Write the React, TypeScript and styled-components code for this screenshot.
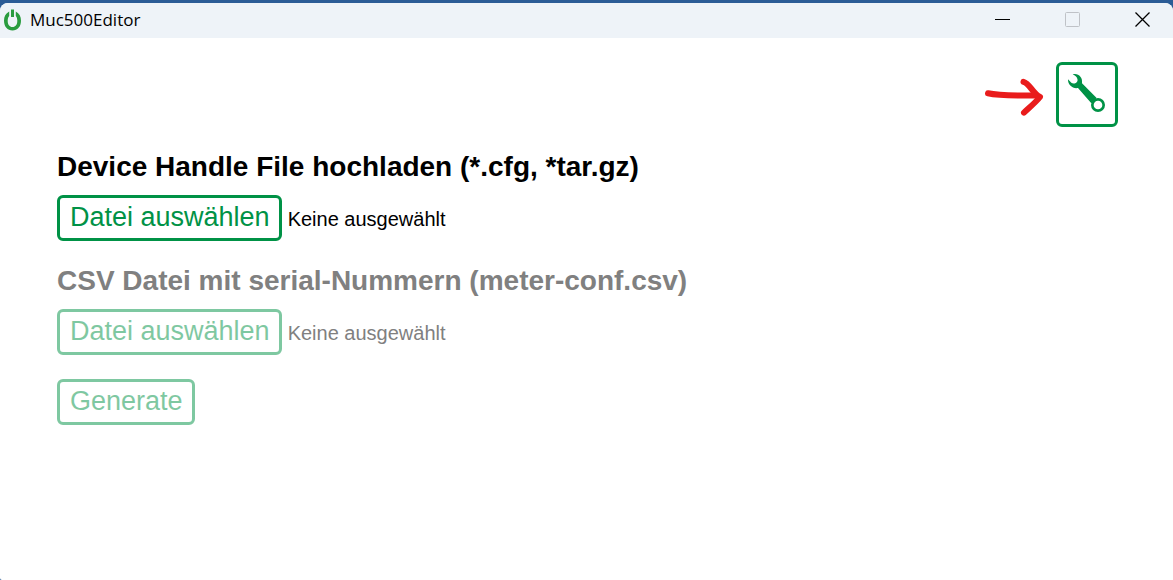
import React, { useRef, useState } from 'react';
import styled, { createGlobalStyle } from 'styled-components';

const green = '#009246';

const GlobalStyle = createGlobalStyle`
  * { box-sizing: border-box; }
  body {
    margin: 0;
    background: #2b5c96;
    font-family: "Liberation Sans", Arial, sans-serif;
  }
`;

const Desktop = styled.div`
  padding-top: 3px;
`;

const AppWindow = styled.div`
  display: flex;
  flex-direction: column;
  min-height: calc(100vh - 3px);
  background: #fff;
  border-radius: 8px 8px 0 2px;
  overflow: hidden;
`;

const TitleBar = styled.header`
  display: flex;
  align-items: center;
  gap: 9px;
  height: 35px;
  padding: 0 0 2px 4px;
  background: #eef3f8;
`;

const Title = styled.span`
  flex: 1;
  font-family: "Open Sans", sans-serif;
  font-size: 17px;
  line-height: 24px;
  color: #000;
`;

const CaptionButton = styled.button`
  display: flex;
  align-items: center;
  justify-content: center;
  width: 61px;
  height: 33px;
  padding: 0;
  border: 0;
  background: transparent;
  color: #000;

  &:disabled { color: #bfc2c7; }
`;

const Content = styled.main`
  display: flex;
  flex-direction: column;
  align-items: flex-start;
  gap: 24px;
  padding: 24px 55px 24px 57px;
`;

const Toolbar = styled.div`
  display: flex;
  align-self: stretch;
  align-items: center;
  justify-content: flex-end;
  gap: 10px;
`;

const OutlineButton = styled.button`
  padding: 4px 9px 5px 10px;
  border: 3px solid ${green};
  border-radius: 6px;
  background: #fff;
  color: ${green};
  font-family: inherit;
  font-size: 27px;
  line-height: 31px;

  &:disabled { opacity: 0.5; }
`;

const SettingsButton = styled(OutlineButton)`
  display: flex;
  padding: 0;
`;

const FieldLabel = styled.label<{ $muted: boolean }>`
  display: block;
  margin-bottom: 12px;
  font-size: 28px;
  font-weight: 700;
  line-height: 32px;
  color: ${p => (p.$muted ? '#808080' : '#000')};
`;

const FileRow = styled.div`
  display: flex;
  align-items: baseline;
  gap: 6px;
`;

const FileStatus = styled.span<{ $muted: boolean }>`
  font-size: 20px;
  line-height: 24px;
  color: ${p => (p.$muted ? '#808080' : '#000')};
`;

const HiddenFileInput = styled.input`
  display: none;
`;

const PowerLogo = () => (
  <svg width="17" height="22" viewBox="0 0 17 22" fill="none" aria-hidden="true">
    <path d="M5.200 2.600C1.600 4.400 0 7.900 0 11.700c0 5.800 3.500 9.800 8.500 9.800S17 17.500 17 11.700c0-3.800-1.600-7.300-5.200-9.100v4.300c1.100 1.200 1.500 2.800 1.500 4.800 0 3.900-1.700 6.300-4.800 6.300s-4.800-2.400-4.800-6.300c0-2 .4-3.600 1.500-4.800z" fill="#2a9c3f" />
    <path d="M7 0.500h3v7.500h-3z" fill="#2a9c3f" />
  </svg>
);

const ArrowMark = () => (
  <svg width="62" height="45" viewBox="984 72 62 45" fill="none" stroke="#e91c1c" strokeWidth="6" strokeLinecap="round" strokeLinejoin="round" aria-hidden="true">
    <path d="M988 93.300C1000 96 1012 95.500 1036 95.500" />
    <path d="M1023.500 81.800C1030 83.500 1032 93 1040 97C1036 102 1030 107 1024 112.600" />
  </svg>
);

const WrenchIcon = () => (
  <svg width="56" height="59" viewBox="27 27 168 177" fill={green} aria-hidden="true">
    <path d="M68 55C84 50 99 63 96 82L140 126L124 142L84 96C68 99 53 87 54 70L64 80C72 86 86 79 82 68C80 62 76 60 68 55Z" />
    <circle cx="144" cy="147" r="17" fill="#fff" stroke={green} strokeWidth="8" />
  </svg>
);

interface FileFieldProps {
  id: string;
  label: string;
  accept: string;
  disabled?: boolean;
}

function FileField({ id, label, accept, disabled = false }: FileFieldProps) {
  const input = useRef<HTMLInputElement>(null);
  const [name, setName] = useState('');
  return (
    <div>
      <FieldLabel htmlFor={id} $muted={disabled}>{label}</FieldLabel>
      <FileRow>
        <OutlineButton type="button" disabled={disabled} onClick={() => input.current?.click()}>
          Datei auswählen
        </OutlineButton>
        <HiddenFileInput
          ref={input}
          id={id}
          type="file"
          accept={accept}
          disabled={disabled}
          onChange={e => setName(e.target.files?.[0]?.name ?? '')}
        />
        <FileStatus $muted={disabled}>{name || 'Keine ausgewählt'}</FileStatus>
      </FileRow>
    </div>
  );
}

export default function App() {
  return (
    <Desktop>
      <GlobalStyle />
      <AppWindow>
        <TitleBar>
          <PowerLogo />
          <Title>Muc500Editor</Title>
          <CaptionButton type="button" aria-label="Minimieren">
            <svg width="15" height="15" viewBox="0 0 15 15"><path d="M0 7h15v1H0z" fill="currentColor" /></svg>
          </CaptionButton>
          <CaptionButton type="button" aria-label="Maximieren" disabled>
            <svg width="15" height="15" viewBox="0 0 15 15"><rect x=".5" y=".5" width="14" height="14" rx="1" fill="none" stroke="currentColor" /></svg>
          </CaptionButton>
          <CaptionButton type="button" aria-label="Schließen">
            <svg width="15" height="15" viewBox="0 0 15 15"><path d="M.5.5l14 14M14.500.5l-14 14" stroke="currentColor" strokeWidth="1.300" /></svg>
          </CaptionButton>
        </TitleBar>
        <Content>
          <Toolbar>
            <ArrowMark />
            <SettingsButton type="button" aria-label="Einstellungen">
              <WrenchIcon />
            </SettingsButton>
          </Toolbar>
          <FileField id="device-file" label="Device Handle File hochladen (*.cfg, *tar.gz)" accept=".cfg,.gz" />
          <FileField id="csv-file" label="CSV Datei mit serial-Nummern (meter-conf.csv)" accept=".csv" disabled />
          <OutlineButton type="button" disabled>Generate</OutlineButton>
        </Content>
      </AppWindow>
    </Desktop>
  );
}
